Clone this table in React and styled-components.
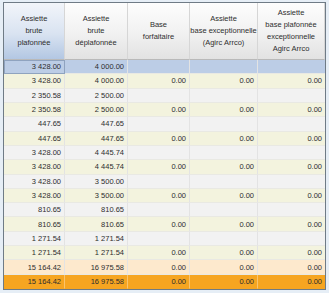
import React from 'react';
import styled, { createGlobalStyle } from 'styled-components';

const GlobalStyle = createGlobalStyle`
  html, body {
    margin: 0;
    padding: 0;
    background: #e6eef6;
  }
  body {
    font-family: 'Liberation Sans', Arial, sans-serif;
  }
`;

const columns = [
  { key: 'plafonnee', label: ['Assiette', 'brute', 'plafonnée'], active: true },
  { key: 'deplafonnee', label: ['Assiette', 'brute', 'déplafonnée'] },
  { key: 'forfaitaire', label: ['Base', 'forfaitaire'] },
  { key: 'exceptionnelle', label: ['Assiette', 'base exceptionnelle', '(Agirc Arrco)'] },
  { key: 'plafExcept', label: ['Assiette', 'base plafonnée', 'exceptionnelle', 'Agirc Arrco'] },
];

const Z = ['0.00', '0.00', '0.00'];

const rows = [
  { values: ['3 428.00', '4 000.00'], variant: 'selected' },
  { values: ['3 428.00', '4 000.00', ...Z] },
  { values: ['2 350.58', '2 500.00'] },
  { values: ['2 350.58', '2 500.00', ...Z] },
  { values: ['447.65', '447.65'] },
  { values: ['447.65', '447.65', ...Z] },
  { values: ['3 428.00', '4 445.74'] },
  { values: ['3 428.00', '4 445.74', ...Z] },
  { values: ['3 428.00', '3 500.00'] },
  { values: ['3 428.00', '3 500.00', ...Z] },
  { values: ['810.65', '810.65'] },
  { values: ['810.65', '810.65', ...Z] },
  { values: ['1 271.54', '1 271.54'] },
  { values: ['1 271.54', '1 271.54', ...Z] },
  { values: ['15 164.42', '16 975.58', ...Z], variant: 'subtotal' },
  { values: ['15 164.42', '16 975.58', ...Z], variant: 'total' },
];

const rowColors = {
  selected: '#bccde6',
  even: '#f2f2f2',
  odd: '#f3f3de',
  subtotal: '#fde9cd',
  total: '#f6a521',
};

function App() {
  return (
    <>
      <GlobalStyle />
      <Page>
        <Frame>
          <Grid>
            {columns.map((col) => (
              <HeaderCell key={col.key} $active={col.active}>
                {col.label.map((line) => (
                  <span key={line}>{line}</span>
                ))}
              </HeaderCell>
            ))}
            {rows.map((row, i) => {
              const variant = row.variant || (i % 2 === 0 ? 'even' : 'odd');
              return columns.map((col, j) => (
                <Cell
                  key={i + '-' + col.key}
                  $variant={variant}
                  $focus={variant === 'selected' && j === 0}
                >
                  {row.values[j] || ''}
                </Cell>
              ));
            })}
          </Grid>
        </Frame>
      </Page>
    </>
  );
}

const Page = styled.div`
  width: 329px;
  height: 293px;
  padding: 2px 3px 0 3px;
  box-sizing: border-box;
  background: #e6eef6;
`;

const Frame = styled.div`
  width: 323px;
  height: 288px;
  box-sizing: border-box;
  border: 1px solid #6f7b86;
  background: #ffffff;
`;

const Grid = styled.div`
  display: grid;
  grid-template-columns: 61px 63px 62px 68px 67px;
  grid-template-rows: 57px repeat(16, 1fr);
  height: 286px;
`;

const HeaderCell = styled.div`
  display: flex;
  flex-direction: column;
  align-items: center;
  justify-content: center;
  box-sizing: border-box;
  border-right: 1px solid #d6d6d6;
  border-bottom: 1px solid #b9b9b9;
  background: ${(p) =>
    p.$active
      ? 'linear-gradient(to bottom, #f2f5fa 0%, #d9e3f1 55%, #b3c7e3 100%)'
      : 'linear-gradient(to bottom, #fdfdfd 0%, #f1f1f1 55%, #e2e2e2 100%)'};
  color: #2e2e2e;
  font-size: 7.5px;
  line-height: 12px;
  text-align: center;
  &:last-child {
    border-right: none;
    line-height: 11px;
  }
`;

const Cell = styled.div`
  box-sizing: border-box;
  display: flex;
  align-items: center;
  justify-content: flex-end;
  padding-right: 3px;
  background: ${(p) => rowColors[p.$variant]};
  border-right: 1px solid ${(p) => (p.$variant === 'total' ? '#f9c46e' : '#e3e3e3')};
  border-bottom: 1px solid ${(p) => (p.$variant === 'total' ? '#f6a521' : '#e9e9e3')};
  outline: ${(p) => (p.$focus ? '1px solid #8fa3bf' : 'none')};
  outline-offset: -1px;
  color: #2e2e2e;
  font-size: 7.5px;
  white-space: nowrap;
  &:nth-child(5n) {
    border-right: none;
  }
`;

export default App;
